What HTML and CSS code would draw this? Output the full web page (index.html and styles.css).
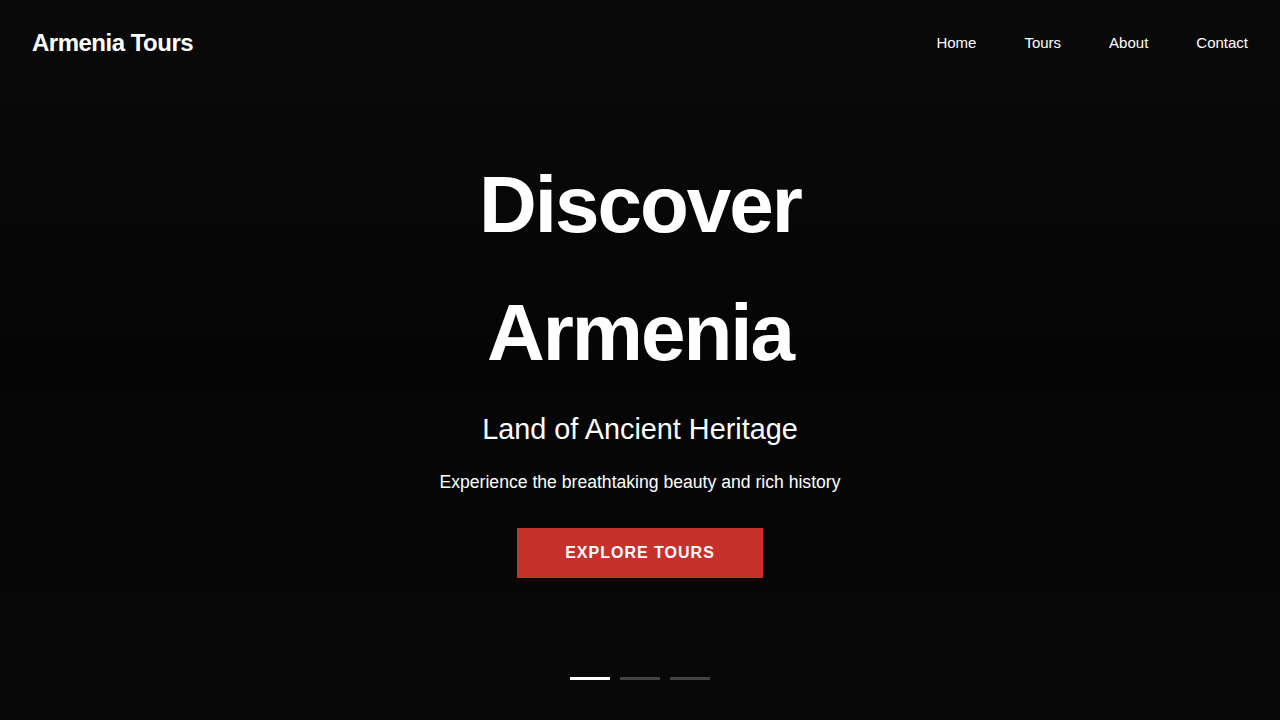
FILE: index.html
```html
<!DOCTYPE html>
<html lang="en">
<head>
<meta charset="utf-8">
<title>Armenia Tours</title>
<link rel="stylesheet" href="styles.css">
</head>
<body>
<div class="page">
  <header class="site-header">
    <a class="logo" href="#">Armenia Tours</a>
    <nav class="nav">
      <a href="#">Home</a>
      <a href="#">Tours</a>
      <a href="#">About</a>
      <a href="#">Contact</a>
    </nav>
  </header>
  <main class="hero">
    <div class="hero-content">
      <h1 class="hero-title">Discover<br>Armenia</h1>
      <h2 class="hero-subtitle">Land of Ancient Heritage</h2>
      <p class="hero-text">Experience the breathtaking beauty and rich history</p>
      <a class="btn" href="#">EXPLORE TOURS</a>
    </div>
    <div class="dots">
      <span class="dot active"></span>
      <span class="dot"></span>
      <span class="dot"></span>
    </div>
  </main>
</div>
</body>
</html>
```

FILE: styles.css
```css
* { box-sizing: border-box; }
html, body { margin: 0; padding: 0; }
body {
  background: #0a0a0a;
  color: #fff;
  font-family: "Liberation Sans", Arial, sans-serif;
}
a { color: inherit; text-decoration: none; }
.page {
  min-height: 720px;
  height: 100vh;
  display: flex;
  flex-direction: column;
  background: linear-gradient(180deg, #0a0a0a 0%, #050505 50%, #080808 100%);
}
.site-header {
  display: flex;
  justify-content: space-between;
  align-items: flex-start;
  padding: 28px 32px;
}
.logo {
  font-size: 24px;
  font-weight: 700;
  letter-spacing: -0.5px;
  line-height: 30px;
}
.nav {
  display: flex;
  gap: 48px;
  margin-top: 6px;
  font-size: 15px;
  line-height: 17px;
}
.hero {
  flex: 1;
  display: flex;
  flex-direction: column;
  align-items: center;
}
.hero-content {
  flex: 1;
  display: flex;
  flex-direction: column;
  align-items: center;
  justify-content: center;
  text-align: center;
  padding-bottom: 44px;
}
.hero-title {
  margin: 0 0 12px;
  font-size: 80px;
  font-weight: 700;
  letter-spacing: -2px;
  line-height: 128px;
}
.hero-subtitle {
  margin: 0;
  font-size: 28.8px;
  font-weight: 400;
  line-height: 1.4;
}
.hero-text {
  margin: 20px 0 0;
  font-size: 17.6px;
  line-height: 1.5;
}
.btn {
  margin-top: 33px;
  background: #c8302c;
  color: #fff;
  font-size: 16px;
  font-weight: 700;
  letter-spacing: 1px;
  line-height: 18px;
  padding: 16px 48px;
}
.dots {
  display: flex;
  gap: 10px;
  padding-bottom: 40px;
}
.dot {
  width: 40px;
  height: 3px;
  background: #444;
}
.dot.active { background: #fff; }
```
